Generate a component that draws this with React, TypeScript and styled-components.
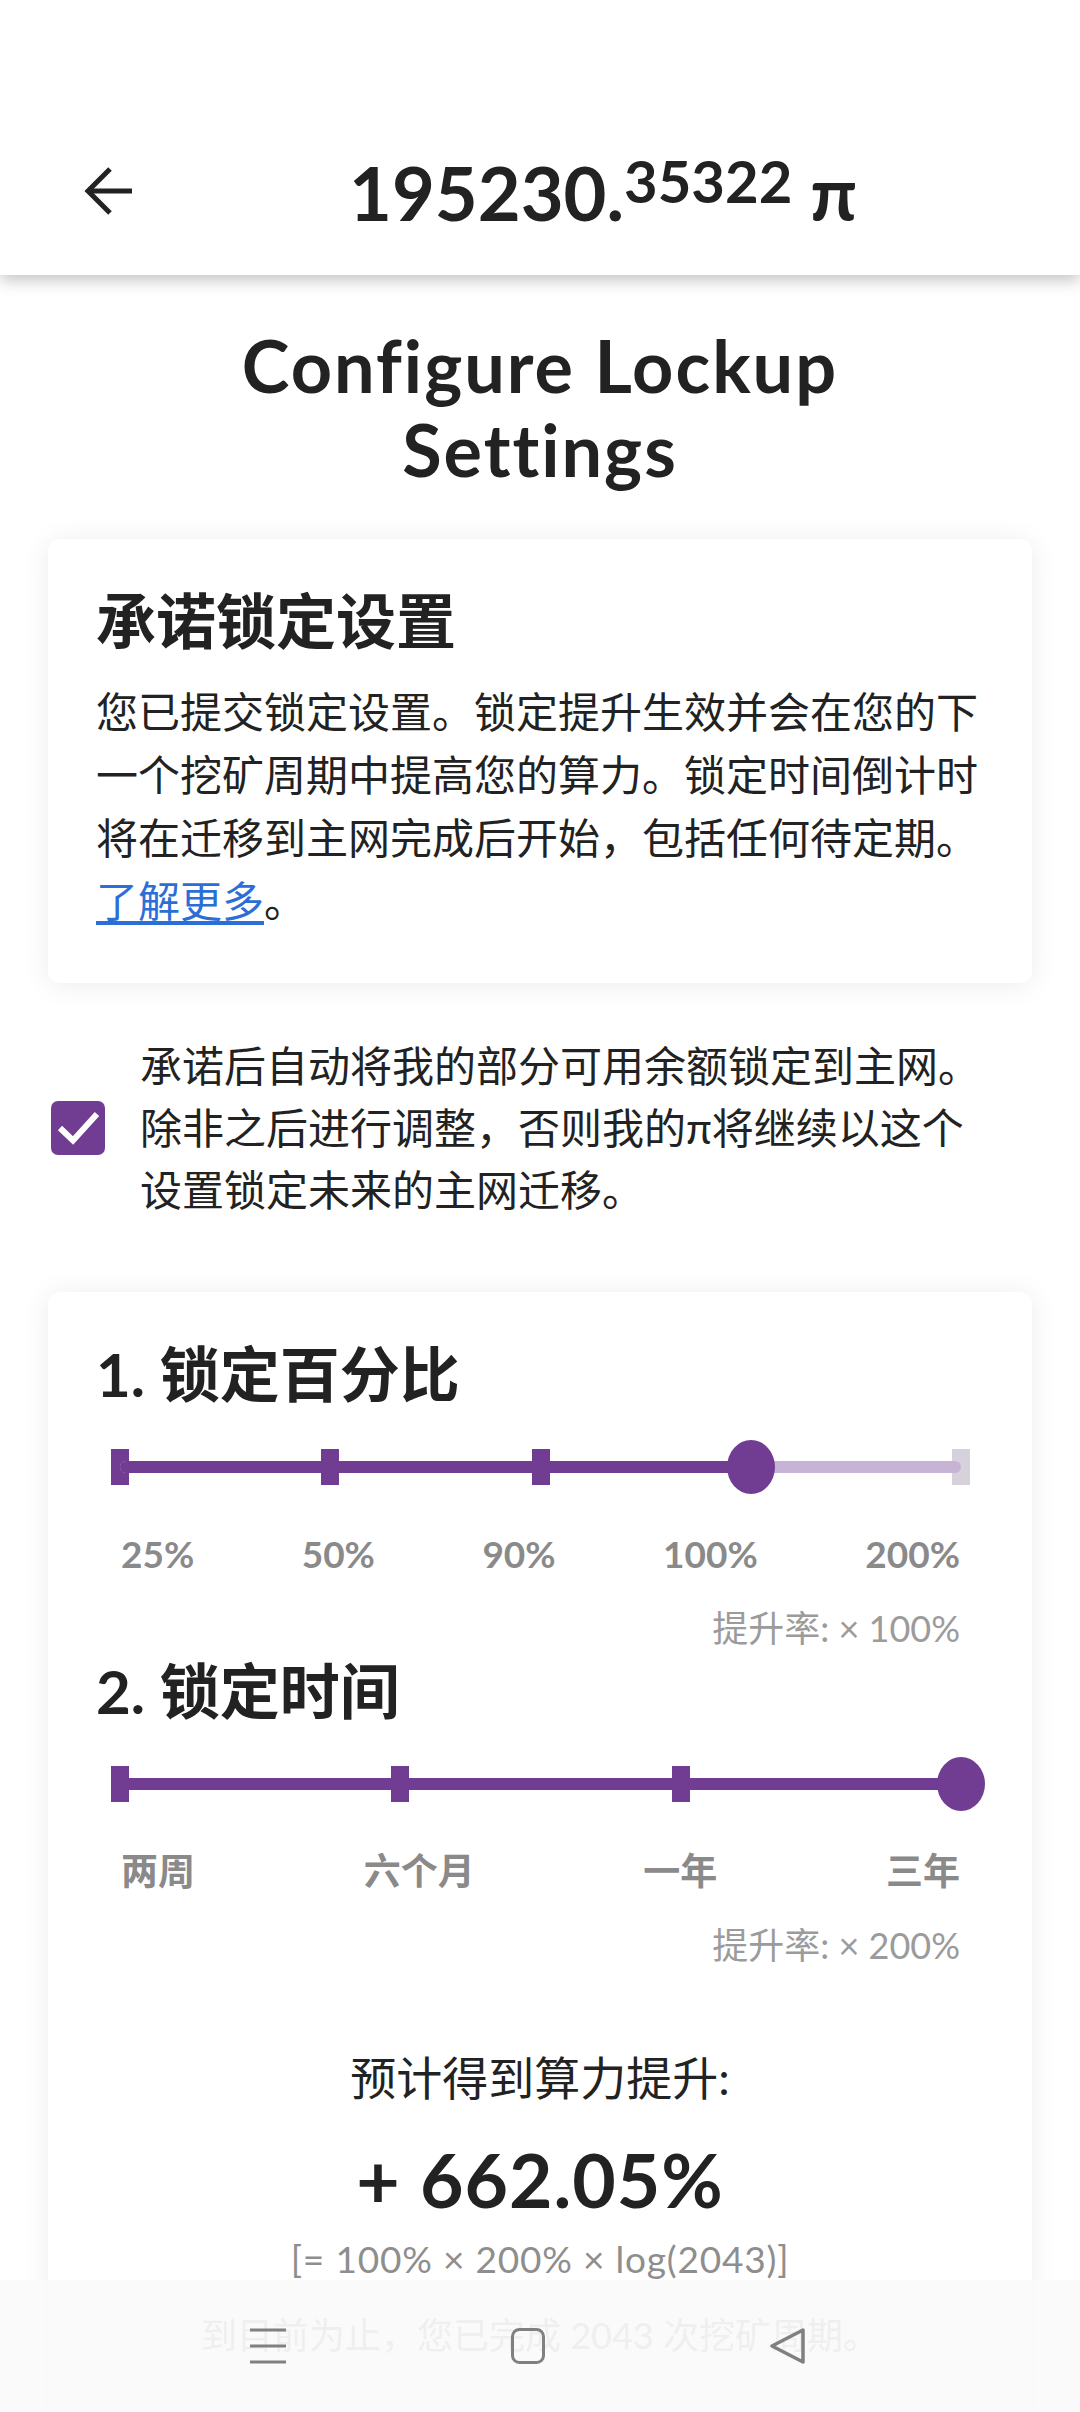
import React from 'react';
import styled, { createGlobalStyle } from 'styled-components';

const PURPLE = '#703d92';

const GlobalStyle = createGlobalStyle`
  html, body {
    margin: 0;
    padding: 0;
    background: #fff;
  }
  body {
    font-family: Lato, "Noto Sans CJK SC", sans-serif;
    color: #222;
  }
  * { box-sizing: border-box; }
`;

const Screen = styled.div`
  position: relative;
  width: 1080px;
  height: 2412px;
  overflow: hidden;
  background: #fff;
`;

const Header = styled.header`
  position: relative;
  z-index: 2;
  height: 275px;
  background: #fff;
  box-shadow: 0 6px 14px rgba(0, 0, 0, 0.22);
  display: flex;
  align-items: flex-end;
`;

const HeaderRow = styled.div`
  width: 100%;
  height: 168px;
  display: flex;
  align-items: center;
  padding: 0 84px;
`;

const BackButton = styled.button`
  width: 48px;
  height: 48px;
  padding: 0;
  border: 0;
  background: none;
  display: flex;
  color: #222;
`;

const Balance = styled.div`
  flex: 1;
  padding-left: 78px;
  text-align: center;
  font-size: 74px;
  font-weight: 700;
  line-height: 1;
  white-space: nowrap;
  color: #222;
`;

const Decimals = styled.span`
  font-size: 58px;
  vertical-align: 18px;
`;

const Pi = styled.span`
  margin-left: 18px;
`;

const Content = styled.main`
  padding: 48px 48px 0;
  display: flex;
  flex-direction: column;
`;

const PageTitle = styled.h1`
  margin: 0;
  font-size: 72px;
  line-height: 84px;
  font-weight: 700;
  letter-spacing: 2px;
  text-align: center;
`;

const Card = styled.section<{ $gap: number }>`
  margin-top: ${(p) => p.$gap}px;
  background: #fff;
  border-radius: 12px;
  box-shadow: 0 2px 28px rgba(0, 0, 0, 0.08);
  padding: 45px 48px 50px;
`;

const CardTitle = styled.h2`
  margin: 0;
  font-size: 60px;
  line-height: 75px;
  font-weight: 700;
`;

const Body = styled.p`
  margin: 22px 0 0;
  font-size: 42px;
  line-height: 63px;
`;

const Link = styled.a`
  color: #2b6fd6;
  text-decoration: underline;
  text-underline-offset: 4px;
`;

const CheckRow = styled.label`
  margin-top: 52px;
  display: flex;
  align-items: center;
  gap: 35px;
  padding: 0 42px 0 3px;
`;

const CheckBox = styled.span`
  flex: none;
  width: 54px;
  height: 54px;
  border-radius: 7px;
  background: ${PURPLE};
  display: flex;
`;

const CheckText = styled.span`
  flex: 1;
  font-size: 42px;
  line-height: 62px;
`;

const SliderBox = styled.div`
  position: relative;
  height: 54px;
  margin: 28px 14px 0 15px;
  display: flex;
  align-items: center;
`;

const TickRow = styled.div`
  width: 100%;
  display: flex;
  justify-content: space-between;
  align-items: center;
`;

const Tick = styled.span<{ $on: boolean }>`
  width: 18px;
  height: 36px;
  background: ${(p) => (p.$on ? PURPLE : '#d6d1da')};
`;

const Track = styled.div`
  position: absolute;
  left: 9px;
  right: 9px;
  top: 21px;
  height: 12px;
  border-radius: 6px;
  background: #c6b3d5;
  overflow: hidden;
`;

const TrackFill = styled.div`
  height: 100%;
  background: ${PURPLE};
`;

const Thumb = styled.span`
  position: absolute;
  top: 0;
  width: 48px;
  height: 54px;
  margin-left: -24px;
  border-radius: 50%;
  background: ${PURPLE};
`;

const LabelRow = styled.div`
  margin: 38px 24px 0 25px;
  display: flex;
  justify-content: space-between;
`;

const StopLabel = styled.span`
  font-size: 37px;
  line-height: 44px;
  font-weight: 700;
  color: #8a8a8a;
`;

const Rate = styled.div`
  margin: 30px 24px 0 0;
  text-align: right;
  font-size: 36px;
  line-height: 44px;
  color: #9b9b9b;
`;

const SectionTitle = styled.h3<{ $gap: number }>`
  margin: ${(p) => p.$gap}px 0 0;
  font-size: 60px;
  line-height: 75px;
  font-weight: 700;
`;

const Summary = styled.div`
  margin-top: 81px;
  text-align: center;
  font-size: 46px;
  line-height: 60px;
`;

const Boost = styled.div`
  margin-top: 27px;
  text-align: center;
  font-size: 75px;
  line-height: 88px;
  font-weight: 700;
  letter-spacing: 1px;
`;

const Formula = styled.div`
  margin-top: 14px;
  text-align: center;
  font-size: 37px;
  line-height: 44px;
  letter-spacing: 0.8px;
  color: #8e8e8e;
`;

const Footnote = styled.div`
  margin-top: 31px;
  text-align: center;
  font-size: 36px;
  line-height: 46px;
  color: #8a8a8a;
  padding-bottom: 120px;
`;

const NavBar = styled.nav`
  position: absolute;
  left: 0;
  right: 0;
  bottom: 0;
  height: 132px;
  background: rgba(250, 250, 250, 0.9);
  display: flex;
  align-items: center;
  gap: 225px;
  padding-left: 250px;
  z-index: 3;
`;

const NavIcon = styled.svg`
  display: block;
  color: #808080;
`;

interface SliderProps {
  stops: number;
  value: number;
}

const Slider: React.FC<SliderProps> = ({ stops, value }) => {
  const ratio = value / (stops - 1);
  return (
    <SliderBox>
      <TickRow>
        {Array.from({ length: stops }).map((_, i) => (
          <Tick key={i} $on={i <= value} />
        ))}
      </TickRow>
      <Track>
        <TrackFill style={{ width: `${ratio * 100}%` }} />
      </Track>
      <Thumb style={{ left: `calc(9px + (100% - 18px) * ${ratio})` }} />
    </SliderBox>
  );
};

const percentStops = ['25%', '50%', '90%', '100%', '200%'];
const timeStops = ['两周', '六个月', '一年', '三年'];

export default function App() {
  return (
    <Screen>
      <GlobalStyle />
      <Header>
        <HeaderRow>
          <BackButton aria-label="back">
            <svg width="48" height="48" viewBox="0 0 48 48" fill="none" stroke="currentColor" strokeWidth="5">
              <path d="M48 24H4" />
              <path d="M26 2L4 24L26 46" />
            </svg>
          </BackButton>
          <Balance>
            195230.<Decimals>35322</Decimals>
            <Pi>π</Pi>
          </Balance>
        </HeaderRow>
      </Header>

      <Content>
        <PageTitle>
          Configure Lockup
          <br />
          Settings
        </PageTitle>

        <Card $gap={48}>
          <CardTitle>承诺锁定设置</CardTitle>
          <Body>
            您已提交锁定设置。锁定提升生效并会在您的下一个挖矿周期中提高您的算力。锁定时间倒计时将在迁移到主网完成后开始，包括任何待定期。
            <Link href="#">了解更多</Link>。
          </Body>
        </Card>

        <CheckRow>
          <CheckBox>
            <svg width="54" height="54" viewBox="0 0 54 54" fill="none" stroke="#fff" strokeWidth="6">
              <path d="M9 27L22 39.5L46 13" />
            </svg>
          </CheckBox>
          <CheckText>承诺后自动将我的部分可用余额锁定到主网。除非之后进行调整，否则我的π将继续以这个设置锁定未来的主网迁移。</CheckText>
        </CheckRow>

        <Card $gap={71}>
          <CardTitle>1. 锁定百分比</CardTitle>
          <Slider stops={5} value={3} />
          <LabelRow>
            {percentStops.map((s) => (
              <StopLabel key={s}>{s}</StopLabel>
            ))}
          </LabelRow>
          <Rate>提升率: × 100%</Rate>

          <SectionTitle $gap={4}>2. 锁定时间</SectionTitle>
          <Slider stops={4} value={3} />
          <LabelRow>
            {timeStops.map((s) => (
              <StopLabel key={s}>{s}</StopLabel>
            ))}
          </LabelRow>
          <Rate>提升率: × 200%</Rate>

          <Summary>预计得到算力提升:</Summary>
          <Boost>+ 662.05%</Boost>
          <Formula>[= 100% × 200% × log(2043)]</Formula>
          <Footnote>到目前为止，您已完成 2043 次挖矿周期。</Footnote>
        </Card>
      </Content>

      <NavBar>
        <NavIcon width="36" height="36" viewBox="0 0 36 36" fill="none" stroke="currentColor" strokeWidth="3">
          <path d="M0 2H36M0 18H36M0 34H36" />
        </NavIcon>
        <NavIcon width="34" height="36" viewBox="0 0 34 36" fill="none" stroke="currentColor" strokeWidth="3">
          <rect x="1.5" y="1.5" width="31" height="33" rx="7" />
        </NavIcon>
        <NavIcon width="36" height="36" viewBox="0 0 36 36" fill="none" stroke="currentColor" strokeWidth="3.5" strokeLinejoin="round">
          <path d="M33 2L2 18L33 34Z" />
        </NavIcon>
      </NavBar>
    </Screen>
  );
}
